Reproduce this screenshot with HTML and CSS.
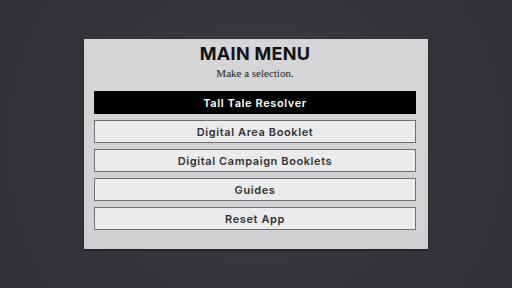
FILE: index.html
```html
<!DOCTYPE html>
<html lang="en">
<head>
    <meta charset="UTF-8">
    <meta name="viewport" content="width=device-width, initial-scale=1.0">
    <title>Main Menu</title>
    <link rel="stylesheet" href="styles.css">
</head>
<body>
    <div class="menu-panel">
        <div class="menu-title">MAIN MENU</div>
        <div class="menu-subtitle">Make a selection.</div>
        <div class="menu-list">
            <button class="menu-button active">Tall Tale Resolver</button>
            <button class="menu-button">Digital Area Booklet</button>
            <button class="menu-button">Digital Campaign Booklets</button>
            <button class="menu-button">Guides</button>
            <button class="menu-button">Reset App</button>
        </div>
    </div>
</body>
</html>
```

FILE: styles.css
```css
body {
    margin: 0;
    padding: 0;
    width: 512px;
    height: 288px;
    background: radial-gradient(circle at 50% 50%, #3c3c44 0%, #34343c 60%, #303038 100%);
    display: flex;
    justify-content: center;
    align-items: center;
    font-family: Inter, "Open Sans", sans-serif;
    overflow: hidden;
}

.menu-panel {
    width: 322px;
    padding: 4px 12px 19px 10px;
    background: linear-gradient(180deg, #d6d6d8 0%, #d1d1d5 100%);
    box-shadow: 0 1px 2px rgba(0, 0, 0, 0.5);
    display: flex;
    flex-direction: column;
    align-items: center;
}

.menu-title {
    font-size: 18px;
    font-weight: 700;
    color: #111;
    line-height: 22px;
    letter-spacing: 0.3px;
}

.menu-subtitle {
    font-family: "Liberation Serif", serif;
    font-size: 11px;
    color: #222;
    line-height: 14px;
    margin-top: 1px;
    margin-bottom: 11px;
}

.menu-list {
    width: 100%;
    display: flex;
    flex-direction: column;
    gap: 6px;
}

.menu-button {
    height: 23px;
    width: 100%;
    background-color: #ebebed;
    border: 1px solid #6f6f73;
    color: #333;
    font-family: Inter, "Open Sans", sans-serif;
    font-size: 11px;
    font-weight: 600;
    letter-spacing: 0.6px;
    padding: 0;
    cursor: pointer;
}

.menu-button.active {
    background-color: #000;
    border-color: #000;
    color: #fff;
}
```
